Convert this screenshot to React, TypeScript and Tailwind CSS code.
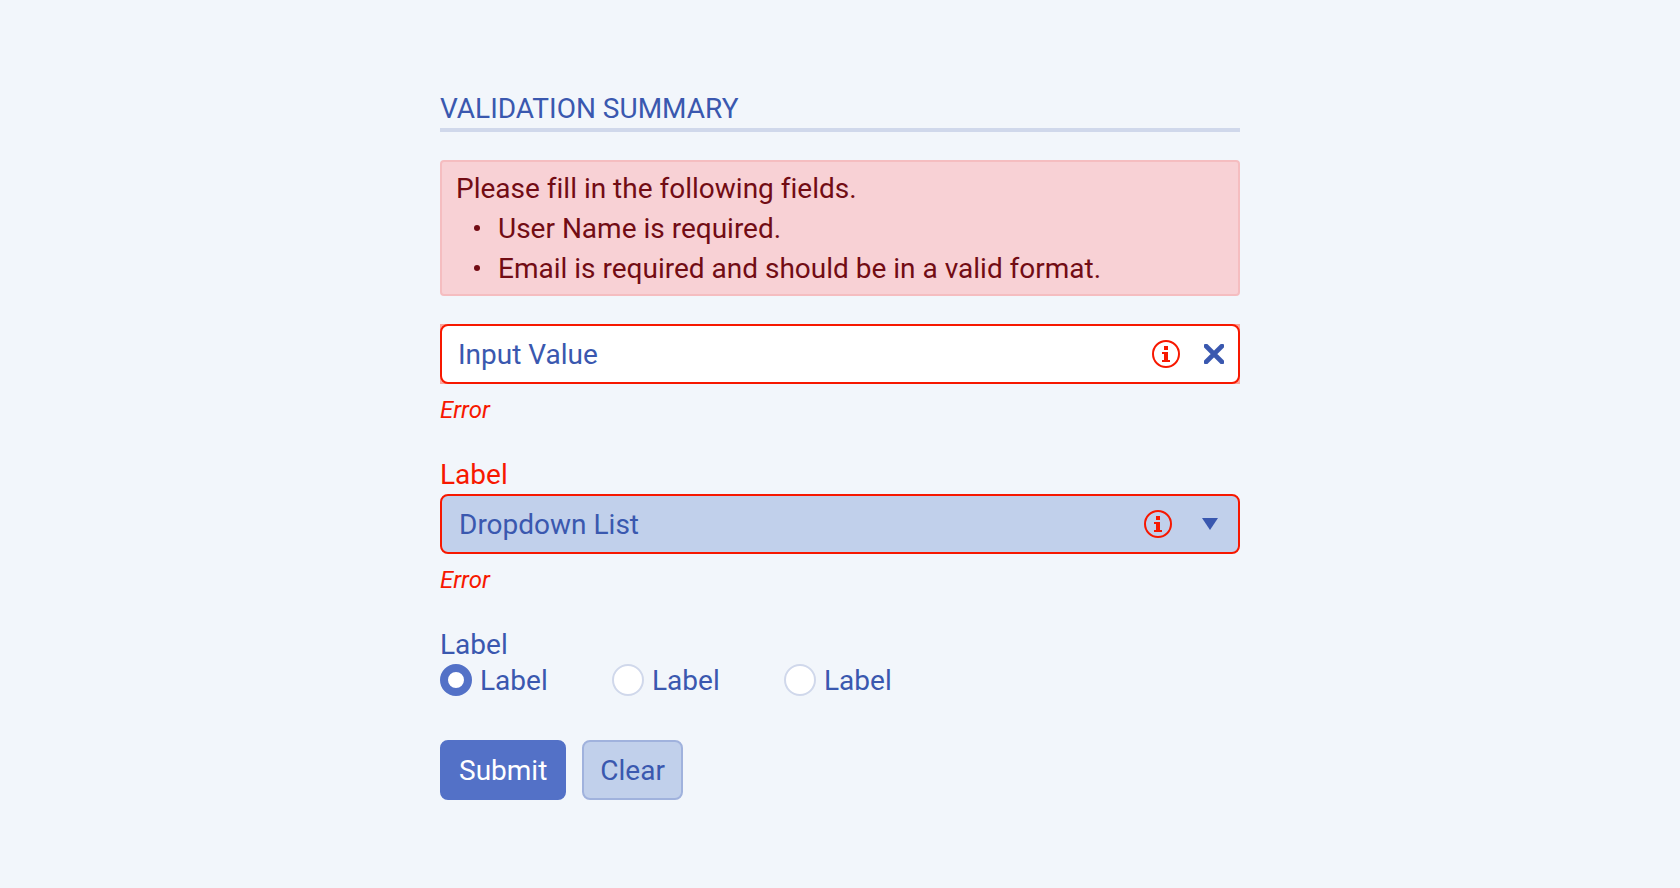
import { useState } from "react";

const fieldErrors = [
  "User Name is required.",
  "Email is required and should be in a valid format.",
];

const radioOptions = ["one", "two", "three"];

function InfoIcon() {
  return (
    <svg
      viewBox="0 0 28 28"
      className="size-7 shrink-0 text-[#f71800]"
      aria-hidden="true"
    >
      <circle
        cx="14"
        cy="14"
        r="13"
        fill="none"
        stroke="currentColor"
        strokeWidth="2"
      />
      <path fill="currentColor" d="M12 6h4v4h-4zM10 12h6v8h2v2h-8v-2h2v-6h-2z" />
    </svg>
  );
}

function ErrorText({ id }: { id: string }) {
  return (
    <p id={id} className="mt-2.5 text-2xl italic text-[#f71800]">
      Error
    </p>
  );
}

export default function App() {
  const [value, setValue] = useState("Input Value");
  const [selected, setSelected] = useState("one");

  function onClear() {
    setValue("");
    setSelected("one");
  }

  return (
    <div className="min-h-screen bg-[#f2f6fb] px-6 py-22 font-['Roboto',sans-serif] text-[28px] leading-10 text-[#3a58af] [font-variant-ligatures:none]">
      <form
        className="mx-auto max-w-[800px]"
        onSubmit={(e) => e.preventDefault()}
      >
        <h1 className="border-b-4 border-[#d0d8eb] pt-px leading-[39px] uppercase">
          Validation Summary
        </h1>

        <div
          role="alert"
          className="mt-7 rounded-sm border-2 border-[#f5bdc0] bg-[#f8d1d5] px-3.5 py-1.5 text-[#720c14]"
        >
          <p className="pt-px leading-[39px]">
            Please fill in the following fields.
          </p>
          <ul>
            {fieldErrors.map((message) => (
              <li key={message} className="flex items-center gap-4.5 pl-4.5">
                <span className="size-1.5 shrink-0 rounded-full bg-current" />
                <span className="pt-px leading-[39px]">{message}</span>
              </li>
            ))}
          </ul>
        </div>

        <div className="mt-7 bg-[#fba59c]">
          <div className="flex h-15 items-center rounded-lg border-2 border-[#f71800] bg-white pr-3.5">
            <input
              type="text"
              aria-label="Input"
              aria-invalid="true"
              aria-describedby="input-error"
              value={value}
              onChange={(e) => setValue(e.target.value)}
              className="h-full min-w-0 flex-1 bg-transparent px-4 pt-px outline-none"
            />
            <InfoIcon />
            <button
              type="button"
              aria-label="Clear input"
              className="ml-6 shrink-0"
              onClick={() => setValue("")}
            >
              <svg viewBox="0 0 20 20" className="size-5">
                <path
                  d="M2 2l16 16M18 2L2 18"
                  fill="none"
                  stroke="currentColor"
                  strokeWidth="4.6"
                  strokeLinecap="round"
                />
              </svg>
            </button>
          </div>
        </div>
        <ErrorText id="input-error" />

        <label
          htmlFor="dropdown"
          className="mt-7 block pt-px leading-[39px] text-[#f71800]"
        >
          Label
        </label>
        <div className="grid items-center">
          <select
            id="dropdown"
            aria-invalid="true"
            aria-describedby="dropdown-error"
            className="col-start-1 row-start-1 h-15 w-full appearance-none rounded-lg border-2 border-[#f71800] bg-[#c1d0eb] pt-0.5 pr-24 pl-[17px] outline-none"
          >
            <option>Dropdown List</option>
          </select>
          <div className="pointer-events-none col-start-1 row-start-1 flex items-center justify-self-end pr-5.5">
            <InfoIcon />
            <svg viewBox="0 0 16 12" className="ml-7.5 h-3 w-4" aria-hidden="true">
              <path fill="currentColor" d="M0 0h16L8 12z" />
            </svg>
          </div>
        </div>
        <ErrorText id="dropdown-error" />

        <fieldset className="mt-7">
          <legend className="pt-px leading-[39px]">Label</legend>
          <div className="flex flex-wrap gap-16">
            {radioOptions.map((option) => (
              <label
                key={option}
                className="flex min-w-27 items-center gap-2"
              >
                <input
                  type="radio"
                  name="choice"
                  value={option}
                  checked={selected === option}
                  onChange={() => setSelected(option)}
                  className="size-8 shrink-0 appearance-none rounded-full border-2 border-[#d0d8eb] bg-white checked:border-8 checked:border-[#5371c7]"
                />
                <span className="pt-0.5 leading-[30px]">Label</span>
              </label>
            ))}
          </div>
        </fieldset>

        <div className="mt-11 flex gap-4">
          <button
            type="submit"
            className="h-15 rounded-lg border-2 border-[#5371c7] bg-[#5371c7] px-[17px] pt-0.5 text-white"
          >
            Submit
          </button>
          <button
            type="button"
            onClick={onClear}
            className="h-15 rounded-lg border-2 border-[#a0b2dd] bg-[#c1d0eb] px-4 pt-0.5"
          >
            Clear
          </button>
        </div>
      </form>
    </div>
  );
}
